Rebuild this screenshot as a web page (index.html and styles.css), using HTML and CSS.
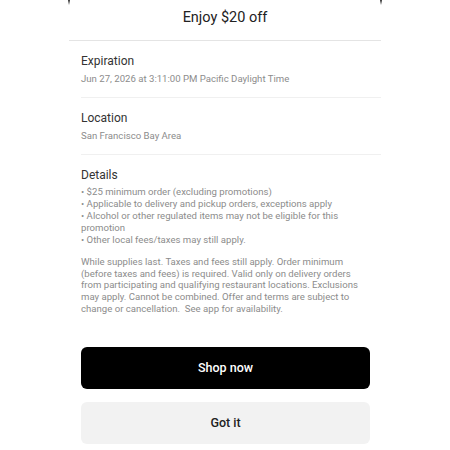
FILE: index.html
```html
<!DOCTYPE html>
<html lang="en">
<head>
  <meta charset="UTF-8">
  <meta name="viewport" content="width=device-width, initial-scale=1.0">
  <title>Enjoy $20 off</title>
  <link rel="stylesheet" href="styles.css">
</head>
<body>
  <div class="sheet">
    <div class="sheet-header">
      <h1>Enjoy $20 off</h1>
    </div>

    <div class="sheet-body">
      <!-- Expiration -->
      <div class="section">
        <h2>Expiration</h2>
        <p class="muted">Jun 27, 2026 at 3:11:00 PM Pacific Daylight Time</p>
      </div>

      <!-- Location -->
      <div class="section">
        <h2>Location</h2>
        <p class="muted">San Francisco Bay Area</p>
      </div>

      <!-- Details -->
      <div class="section section-last">
        <h2>Details</h2>
        <ul class="muted details-list">
          <li>• $25 minimum order (excluding promotions)</li>
          <li>• Applicable to delivery and pickup orders, exceptions apply</li>
          <li>• Alcohol or other regulated items may not be eligible for this promotion</li>
          <li>• Other local fees/taxes may still apply.</li>
        </ul>
        <p class="muted terms">While supplies last. Taxes and fees still apply. Order minimum (before taxes and fees) is required. Valid only on delivery orders from participating and qualifying restaurant locations. Exclusions may apply. Cannot be combined. Offer and terms are subject to change or cancellation.&nbsp; See app for availability.</p>
      </div>

      <div class="actions">
        <button class="button button-primary">Shop now</button>
        <button class="button button-secondary">Got it</button>
      </div>
    </div>
  </div>
</body>
</html>
```

FILE: styles.css
```css
* {
  margin: 0;
  padding: 0;
  box-sizing: border-box;
}

body {
  font-family: Roboto, "Noto Sans", sans-serif;
  background: #fff;
  color: #222;
}

/* Bottom sheet card */
.sheet {
  position: relative;
  width: 312px;
  margin: 0 auto;
  background: #fff;
}

/* dark corner edges peeking at the top */
.sheet::before,
.sheet::after {
  content: '';
  position: absolute;
  top: 0;
  width: 2px;
  height: 5px;
  background: linear-gradient(#333, rgba(80, 80, 80, 0));
}

.sheet::before {
  left: -1px;
}

.sheet::after {
  right: -1px;
}

.sheet-header {
  height: 41px;
  display: flex;
  align-items: center;
  justify-content: center;
  padding-bottom: 6px;
  border-bottom: 1px solid #e4e4e4;
}

h1 {
  font-size: 14.5px;
  font-weight: 400;
  color: #222;
}

.sheet-body {
  padding-left: 12px;
}

.section {
  padding: 12px 11px 12px 0;
  border-bottom: 1px solid #f0f0f0;
}

.section-last {
  border-bottom: none;
}

h2 {
  font-size: 12px;
  font-weight: 400;
  line-height: 16px;
  color: #333;
  margin-bottom: 4px;
}

.section-last h2 {
  margin-bottom: 3px;
}

.muted {
  font-size: 9.6px;
  line-height: 12px;
  color: #8c8c8c;
}

.details-list {
  list-style: none;
}

.terms {
  margin-top: 10px;
  line-height: 11.7px;
}

.actions {
  padding: 20px 11px 0 0;
  display: flex;
  flex-direction: column;
  gap: 13px;
}

.button {
  height: 42px;
  border: none;
  border-radius: 6px;
  font-family: Roboto, "Noto Sans", sans-serif;
  font-size: 12.5px;
  font-weight: 500;
  cursor: pointer;
}

.button-primary {
  background: #000;
  color: #fff;
}

.button-secondary {
  background: #f2f2f2;
  color: #222;
}
```
